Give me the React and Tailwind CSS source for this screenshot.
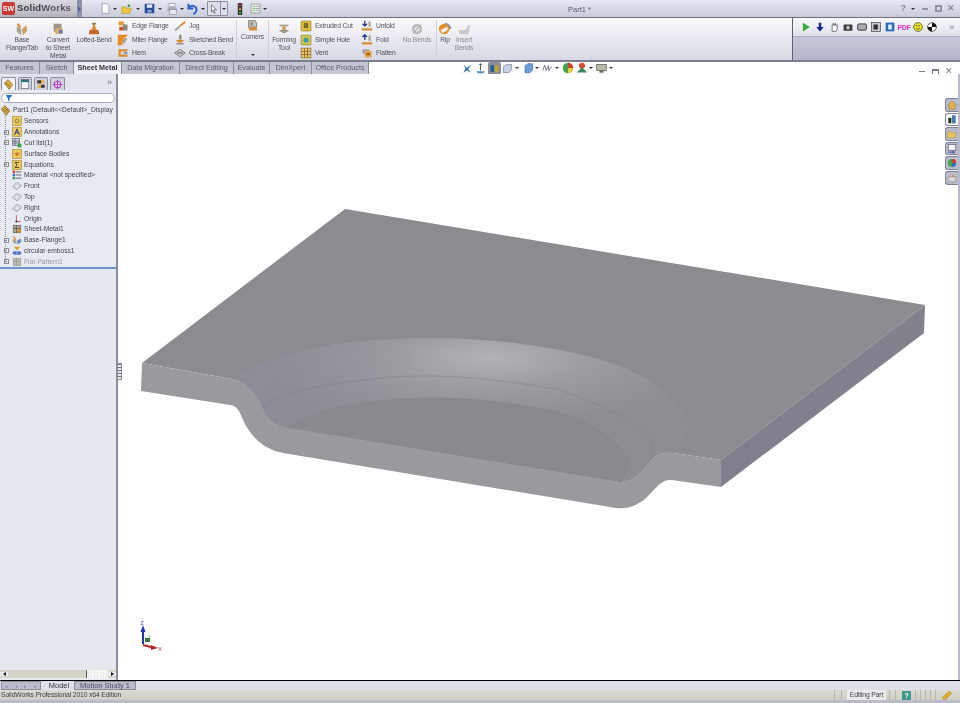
const Ic = ({ s = 12, children, className = "" }) => (
  <svg width={s} height={s} viewBox="0 0 16 16" className={`shrink-0 ${className}`}>
    {children}
  </svg>
);

// ---- ribbon icons ----
const icons = {
  base: <><path d="M2 5l5 3v7l-5-4z" fill="#a8a294" /><path d="M8 8l5-4 1 6-5 5z" fill="#c9a15f" /><path d="M4 1l3 5-2 1-3-4z" fill="#e08a2e" /></>,
  convert: <><rect x="3" y="2" width="9" height="9" fill="#9a958c" /><path d="M5 7l8 0 1 6-9 1z" fill="#d8b071" /><circle cx="11" cy="11" r="2.5" fill="#6f7fa8" /></>,
  loft: <><path d="M8 1l3 8H5z" fill="#e08a2e" /><path d="M3 9h10l1 5H2z" fill="#c2682a" /><rect x="6" y="1" width="4" height="2" fill="#8a6a3c" /></>,
  edge: <><path d="M2 2h7v5H2z" fill="#e59a2a" /><path d="M8 6h6v8H8z" fill="#8d8778" /><path d="M3 9h5v5H3z" fill="#c9571f" /></>,
  miter: <><path d="M1 1h14L8 7 7 15H1z" fill="#ea8a20" /><path d="M7 8l5-3 2 1-5 8z" fill="#a8a294" /></>,
  hem: <><path d="M2 3h12v3H5v4h9v3H2z" fill="#d98a2c" /><path d="M9 7h5v2H9z" fill="#6a7fa0" /></>,
  jog: <><path d="M1 12l7-5 1 2-7 6z" fill="#a6a095" /><path d="M8 6l7-5v3l-6 5z" fill="#d88c35" /></>,
  sketched: <><path d="M7 1h3v6H7z" fill="#8d8778" /><path d="M2 9l6-2 6 2-6 3z" fill="#d88c35" /><path d="M3 12h10v2H3z" fill="#9a948a" /></>,
  cross: <><path d="M1 8l7-5 7 5-7 5z" fill="#c8c8c8" stroke="#6a6a6a" strokeWidth="1" /><path d="M4 8h8" stroke="#444" strokeWidth="1" /></>,
  corners: <><path d="M3 2h8l2 3v5H3z" fill="#c8c6c0" stroke="#77736a" /><path d="M3 10h10l1 4H4z" fill="#d88c35" /><circle cx="7" cy="6" r="2" fill="#8a8a90" /></>,
  forming: <><path d="M3 3h10v2H3z" fill="#a79f90" /><path d="M6 5h4v4H6z" fill="#d8a03c" /><path d="M2 10l6-2 6 2-6 3z" fill="#9c978c" /></>,
  cut: <><rect x="1.500" y="1.500" width="13" height="13" rx="1" fill="#e9c536" stroke="#8a7a20" /><rect x="5" y="4" width="6" height="7" fill="#7c6d2e" /></>,
  hole: <><rect x="1.500" y="1.500" width="13" height="13" rx="1" fill="#d9c94a" stroke="#7f8a2a" /><circle cx="8" cy="8" r="3.5" fill="#3f9aa8" /></>,
  vent: <><rect x="1.500" y="1.500" width="13" height="13" fill="#e9c872" stroke="#8a6a20" /><path d="M2 6h12M2 10h12M6 2v12M10 2v12" stroke="#8a5a20" strokeWidth="1" /></>,
  unfold: <><path d="M5 1v7M2 5l3 3 3-3" stroke="#1b2f86" strokeWidth="1.6" fill="none" /><path d="M10 2h3v7h-3z" fill="#a8a294" /><path d="M1 11h14v3H1z" fill="#d88c35" /></>,
  fold: <><path d="M5 8V1M2 4l3-3 3 3" stroke="#1b2f86" strokeWidth="1.6" fill="none" /><path d="M10 2h3v7h-3z" fill="#a8a294" /><path d="M1 11h14v3H1z" fill="#d88c35" /></>,
  flatten: <><path d="M2 3h9v6H2z" fill="#9aa0b0" /><path d="M5 5h9v9H5z" fill="#e2a24a" /><path d="M7 8h5v3H7z" fill="#a35f22" /></>,
  nobends: <><circle cx="8" cy="8" r="6" fill="#bdbdbd" /><circle cx="8" cy="8" r="3" fill="#e2e2e2" /><path d="M3 13L13 3" stroke="#a0a0a0" /></>,
  rip: <><path d="M8 1a7 7 0 017 7H8z" fill="#7d8cb0" /><circle cx="7" cy="8" r="6" fill="#e58d2a" /><path d="M3 9l8-4v4l-6 4z" fill="#eee" /></>,
  insert: <><path d="M2 9h8l3-6 2 1-2 10H3z" fill="#c9c9c9" /></>,
};

const LargeBtn = ({ icon, lines, w, muted, high, extra }) => (
  <div className={`flex flex-col items-center ${high ? "pt-[1px]" : "pt-[4px]"} ${muted ? "text-[#8b8b92]" : "text-[#50505c]"}`} style={{ width: w }}>
    <Ic s={high ? 13 : 14}>{icons[icon]}</Ic>
    <div className={`${high ? "mt-[1px]" : ""} text-center leading-[8px]`}>
      {lines.map((l) => (
        <div key={l} className="whitespace-nowrap">{l}</div>
      ))}
    </div>
    {extra}
  </div>
);

const SmallCol = ({ rows, w }) => (
  <div className="flex flex-col pt-[1px]" style={{ width: w }}>
    {rows.map(([icon, label, muted]) => (
      <div key={label} className={`flex h-[14px] items-center gap-[3px] whitespace-nowrap ${muted ? "text-[#8b8b92]" : "text-[#50505c]"}`}>
        <Ic s={12}>{icons[icon]}</Ic>
        {label}
      </div>
    ))}
  </div>
);

const Divider = () => <div className="mx-[1px] my-[2px] w-[1px] bg-[#d0d1da]" />;

const Caret = ({ className = "" }) => (
  <span className={`inline-block h-0 w-0 shrink-0 border-x-[2px] border-t-[2px] border-x-transparent border-t-[#333] ${className}`} />
);

const QuickAccess = () => (
  <div className="ml-[18px] flex items-center">
    <Ic s={11}><path d="M3 1h7l3 3v11H3z" fill="#fff" stroke="#7a8aa0" /></Ic>
    <Caret className="ml-[2px]" />
    <Ic s={12} className="ml-[4px]"><path d="M1 5h5l1 2h7l-2 7H1z" fill="#eac64a" stroke="#a78a20" strokeWidth=".6" /><path d="M9 1l4 3-4 2z" fill="#3aa03a" /></Ic>
    <Caret className="ml-[3px]" />
    <Ic s={11} className="ml-[4px]"><rect x="1" y="1" width="14" height="14" rx="1" fill="#2a4a9c" /><rect x="4" y="2" width="8" height="5" fill="#dfe8f5" /><rect x="5" y="10" width="6" height="4" fill="#8ea4cc" /></Ic>
    <Caret className="ml-[3px]" />
    <Ic s={12} className="ml-[4px]"><rect x="4" y="1" width="8" height="4" fill="#f2f2f2" stroke="#777" strokeWidth=".6" /><rect x="2" y="5" width="12" height="6" fill="#a9aeb8" /><rect x="5" y="9" width="9" height="6" fill="#e5e7ef" stroke="#777" strokeWidth=".6" /></Ic>
    <Caret className="ml-[2px]" />
    <Ic s={13} className="ml-[2px]"><path d="M3 2v6h6" fill="none" stroke="#2a5fc4" strokeWidth="2.4" /><path d="M3 8c3-5 9-4 10 1 0 3-2 5-4 6" fill="none" stroke="#2a5fc4" strokeWidth="2.4" /></Ic>
    <Caret className="ml-[2px]" />
    <div className="ml-[2px] flex h-[15px] items-center rounded-[1px] border border-[#8c8fa0] bg-[#dcdfe8]">
      <Ic s={10} className="mx-[1px]"><path d="M4 1l8 8H8l2 5-2 1-2-5-2 3z" fill="#fff" stroke="#445" strokeWidth="1" /></Ic>
      <span className="flex h-full items-center border-l border-[#8c8fa0] px-[1px]"><Caret /></span>
    </div>
    <Ic s={12} className="ml-[6px]"><rect x="5" y="0" width="6" height="16" rx="1" fill="#3b3b3b" /><circle cx="8" cy="3" r="1.5" fill="#e2342c" /><circle cx="8" cy="8" r="1.5" fill="#e8b52c" /><circle cx="8" cy="13" r="1.5" fill="#3aa83a" /></Ic>
    <Ic s={11} className="ml-[4px]"><rect x="1.500" y="1.500" width="13" height="13" fill="#f4f6f0" stroke="#6c8a72" /><path d="M4 5h3M4 8h3M4 11h3" stroke="#3aa03a" strokeWidth="1.2" /><path d="M8 5h5M8 8h5M8 11h5" stroke="#6b7a90" /></Ic>
    <Caret className="ml-[2px]" />
  </div>
);

const TitleBar = () => (
  <div className="flex h-[18px] items-center border-b border-[#6f7180] bg-gradient-to-b from-[#e6e8f2] to-[#c8cbda]">
    <div className="flex h-full w-[77px] items-center bg-gradient-to-b from-[#d9dae0] to-[#b4b5bc]">
      <div className="ml-[2px] flex h-[13px] w-[13px] items-center justify-center rounded-[2px] bg-[#c83a33] text-[7px] font-bold leading-none text-white">SW</div>
      <span className="ml-[2px] text-[9.5px] font-bold tracking-[0.2px] text-[#3a3a42]">Solid<span className="text-[#55555f]">Works</span></span>
    </div>
    <div className="flex h-full w-[5px] items-center justify-center bg-[#8e92a6]">
      <span className="h-0 w-0 border-y-[3px] border-l-[3px] border-y-transparent border-l-[#4d5fa0]" />
    </div>
    <QuickAccess />
    <div className="flex-1" />
    <span className="absolute left-[568px] top-[5px] text-[7.5px] leading-[9px] text-[#55556a]">Part1 *</span>
    <div className="mr-[5px] flex items-center text-[9px] font-bold leading-none text-[#8a8ea0]">
      <span>?</span>
      <Caret className="ml-[5px]" />
      <span className="ml-[7px] h-[2px] w-[6px] bg-[#9094a6]" />
      <span className="ml-[7px] h-[7px] w-[7px] border-2 border-[#9094a6]" />
      <span className="ml-[5px]">✕</span>
    </div>
  </div>
);

const Macro = () => (
  <div className="flex h-[42px] w-[168px] flex-col border-l border-[#5f6170]">
    <div className="flex h-[18px] items-center gap-[4px] bg-gradient-to-b from-[#f8f9fc] to-[#dfe1ec] pl-[8px]">
      <Ic s={10}><path d="M3 1l11 7-11 7z" fill="#37a83c" /></Ic>
      <Ic s={10}><path d="M6 1h4v7h4l-6 7-6-7h4z" fill="#16258c" /></Ic>
      <Ic s={10}><path d="M5 15V5l2-3 1 4 2-4 1 4 2-2v7l-2 4z" fill="#fff" stroke="#333" strokeWidth="1" /></Ic>
      <Ic s={10}><rect x="1" y="4" width="14" height="10" rx="1" fill="#3a3a3a" /><circle cx="8" cy="9" r="3" fill="#bbb" /></Ic>
      <Ic s={10}><rect x="1" y="3" width="14" height="10" rx="2" fill="#aaa" stroke="#333" strokeWidth="1.4" /></Ic>
      <Ic s={10}><rect x="1" y="1" width="14" height="14" fill="#c8c8d0" stroke="#333" /><path d="M4 4h7v8H4z" fill="#333" /></Ic>
      <Ic s={10}><rect x="1" y="1" width="14" height="14" fill="#2a6ab8" /><rect x="5" y="4" width="6" height="8" fill="#d8e8f4" /></Ic>
      <span className="flex w-[10px] justify-center whitespace-nowrap text-[7px] font-bold leading-none tracking-[-0.3px] text-[#ea2ec8]">PDF</span>
      <Ic s={10}><circle cx="8" cy="8" r="7" fill="#e8e01c" stroke="#333" strokeWidth="1" /><path d="M5 10q3 3 6 0" stroke="#333" fill="none" /><circle cx="6" cy="6" r="1" fill="#333" /><circle cx="10" cy="6" r="1" fill="#333" /></Ic>
      <Ic s={10}><circle cx="8" cy="8" r="7" fill="#fff" stroke="#111" /><path d="M8 1a7 7 0 017 7H8zM8 8v7a7 7 0 01-7-7z" fill="#111" /></Ic>
      <span className="ml-auto mr-[6px] text-[9px] leading-none text-[#7c7e90]">»</span>
    </div>
    <div className="flex-1 border-t border-[#a9acc0] bg-gradient-to-b from-[#c5c8da] to-[#b3b6ca]" />
  </div>
);

const Ribbon = () => (
  <div className="flex h-[44px] border-b-2 border-[#7d7e8c] bg-gradient-to-b from-[#fbfbfd] to-[#d6d8e4] text-[6.8px] leading-[8px] tracking-[-0.17px]">
    <div className="w-[2px]" />
    <LargeBtn icon="base" lines={["Base", "Flange/Tab"]} w={40} />
    <LargeBtn icon="convert" lines={["Convert", "to Sheet", "Metal"]} w={32} />
    <LargeBtn icon="loft" lines={["Lofted-Bend"]} w={40} />
    <div className="w-[3px]" />
    <SmallCol w={57} rows={[["edge", "Edge Flange"], ["miter", "Miter Flange"], ["hem", "Hem"]]} />
    <SmallCol w={61} rows={[["jog", "Jog"], ["sketched", "Sketched Bend"], ["cross", "Cross-Break"]]} />
    <Divider />
    <LargeBtn icon="corners" lines={["Corners"]} w={29} high extra={<Caret className="mt-[13px]" />} />
    <Divider />
    <LargeBtn icon="forming" lines={["Forming", "Tool"]} w={28} />
    <div className="w-[2px]" />
    <SmallCol w={61} rows={[["cut", "Extruded Cut"], ["hole", "Simple Hole"], ["vent", "Vent"]]} />
    <SmallCol w={38} rows={[["unfold", "Unfold"], ["fold", "Fold"], ["flatten", "Flatten"]]} />
    <LargeBtn icon="nobends" lines={["No Bends"]} w={36} muted />
    <Divider />
    <LargeBtn icon="rip" lines={["Rip"]} w={14} />
    <LargeBtn icon="insert" lines={["Insert", "Bends"]} w={24} muted />
    <div className="flex-1" />
    <Macro />
  </div>
);

const cmTabs = [
  ["Features", 40],
  ["Sketch", 34],
  ["Sheet Metal", 48, true],
  ["Data Migration", 58],
  ["Direct Editing", 54],
  ["Evaluate", 36],
  ["DimXpert", 42],
  ["Office Products", 57],
];

const Hud = () => (
  <div className="ml-[93px] flex items-center">
    <Ic s={11}><path d="M2 2l5 5 7-5-5 7 4 5-6-3-5 3 3-6z" fill="#3b78a8" /></Ic>
    <Ic s={11} className="ml-[2px]"><path d="M8 1v10M6 3l2-2 2 2" stroke="#222" fill="none" /><path d="M2 12h12l-2 3H4z" fill="#4a8ac8" /></Ic>
    <div className="ml-[2px] flex h-[13px] w-[13px] items-center justify-center rounded-[2px] bg-[#8c8d96]">
      <Ic s={9}><rect x="1" y="2" width="6" height="12" fill="#1f5d96" /><rect x="9" y="2" width="6" height="12" fill="#c9a52c" /></Ic>
    </div>
    <Ic s={11} className="ml-[1px]"><path d="M2 5l5-3h7v8l-4 4H2z" fill="#c4d2e4" stroke="#6f7e98" /></Ic>
    <Caret className="ml-[2px]" />
    <Ic s={11} className="ml-[4px]"><path d="M3 4l4-3h7v9l-4 4H3z" fill="#6e9ed8" stroke="#4a6ea4" /></Ic>
    <Caret className="ml-[1px]" />
    <Ic s={11} className="ml-[3px]"><path d="M1 11l3-8 2 8 3-7 1 7 4-6" fill="none" stroke="#667" strokeWidth="1.2" /></Ic>
    <Caret className="ml-[2px]" />
    <Ic s={12} className="ml-[3px]"><circle cx="8" cy="8" r="7" fill="#3fa64a" /><path d="M8 8V1a7 7 0 017 7z" fill="#d93a30" /><path d="M8 8h7a7 7 0 01-7 7z" fill="#e8c83a" /></Ic>
    <Ic s={12} className="ml-[2px]"><circle cx="8" cy="5" r="4" fill="#d94a30" /><path d="M1 14l7-7 7 7z" fill="#3f8a5a" /></Ic>
    <Caret className="ml-[1px]" />
    <Ic s={11} className="ml-[3px]"><rect x="1" y="2" width="14" height="9" fill="#b8b7a8" stroke="#555" /><rect x="5" y="11" width="6" height="3" fill="#666" /></Ic>
    <Caret className="ml-[2px]" />
  </div>
);

const TabsRow = () => (
  <div className="relative flex h-[12px] items-center bg-white text-[7.2px]">
    {cmTabs.map(([label, w, active]) => (
      <div
        key={label}
        style={{ width: w }}
        className={`flex h-[12px] items-center justify-center whitespace-nowrap border-r border-[#8b8c98] ${
          active ? "bg-[#eff0f5] font-bold text-[#33333d]" : "bg-[#c3c5d0] text-[#5a5a66]"
        }`}
      >
        {label}
      </div>
    ))}
    <Hud />
    <div className="absolute right-[7px] top-[5px] flex items-center text-[9px] leading-none text-[#777a88]">
      <span className="h-[1px] w-[6px] bg-[#777a88]" />
      <span className="ml-[7px] h-[6px] w-[7px] border border-t-2 border-[#777a88]" />
      <span className="ml-[6px]">✕</span>
    </div>
  </div>
);

const plane = <><path d="M1 9l7-7 7 5-7 7z" fill="none" stroke="#777" /><path d="M4 9l4-4 4 3-4 4z" fill="none" stroke="#aaa" strokeWidth=".7" /></>;

// ---- feature tree ----
const tree = [
  { label: "Sensors", icon: <><rect x="1" y="1" width="14" height="14" fill="#eac95a" stroke="#a88418" /><circle cx="8" cy="8" r="3" fill="none" stroke="#555" /></> },
  { label: "Annotations", plus: true, icon: <><rect x="1" y="1" width="14" height="14" fill="#eac95a" stroke="#a88418" /><path d="M4 13L8 3l4 10M6 9h4" fill="none" stroke="#1f3a8a" strokeWidth="1.6" /></> },
  { label: "Cut list(1)", plus: true, icon: <><rect x="1" y="1" width="11" height="11" fill="#c8cfe0" stroke="#556" /><path d="M1 5h11M1 8h11M5 1v11" stroke="#556" /><circle cx="12" cy="12" r="3.5" fill="#3aa04a" /></> },
  { label: "Surface Bodies", icon: <><rect x="1" y="1" width="14" height="14" fill="#eac95a" stroke="#a88418" /><path d="M4 7l4 5 4-5-4-2z" fill="#d8752a" /></> },
  { label: "Equations", plus: true, icon: <><rect x="1" y="1" width="14" height="14" fill="#eac95a" stroke="#a88418" /><path d="M11 4H5l3 4-3 4h6" fill="none" stroke="#222" strokeWidth="1.2" /></> },
  { label: "Material <not specified>", icon: <><path d="M6 3h9M6 8h9M6 13h9" stroke="#555" strokeWidth="1.4" /><rect x="1" y="1" width="4" height="4" fill="#d83a30" /><rect x="1" y="6" width="4" height="4" fill="#3a6ac8" /><rect x="1" y="11" width="4" height="4" fill="#3aa04a" /></> },
  { label: "Front", icon: plane },
  { label: "Top", icon: plane },
  { label: "Right", icon: plane },
  { label: "Origin", icon: <><path d="M7 2v10h7" fill="none" stroke="#c03030" strokeWidth="1.2" /><circle cx="7" cy="12" r="1.6" fill="#333" /></> },
  { label: "Sheet-Metal1", icon: <><rect x="2" y="2" width="12" height="12" fill="#b4a88a" stroke="#555" /><path d="M2 7h12M7 2v12" stroke="#444" /><path d="M9 9h5v5H9z" fill="#d88c35" /></> },
  { label: "Base-Flange1", plus: true, icon: <><path d="M1 6l6 3v6l-6-4z" fill="#a8a294" /><path d="M8 9l6-4 1 6-6 4z" fill="#7089c0" /><path d="M3 1l4 6-2 1-3-4z" fill="#e08a2e" /></> },
  { label: "circular emboss1", plus: true, icon: <><path d="M3 1h10L8 7z" fill="#e0a02a" /><ellipse cx="8" cy="11" rx="7" ry="3" fill="#4a78c0" /><path d="M8 7v6" stroke="#fff" /></> },
  { label: "Flat-Pattern1", plus: true, muted: true, icon: <><rect x="2" y="2" width="12" height="12" fill="#bdbbb4" stroke="#999" /><path d="M2 7h12M7 2v12" stroke="#8f8f8f" /></> },
];

const Sidebar = () => (
  <div className="flex w-[118px] shrink-0 flex-col border-r-2 border-[#8b8d9c] bg-[#e8eaf1] text-[6.7px]">
    <div className="flex h-[16px] items-end gap-[2px] bg-[#e2e4ee] pl-[1px]">
      <div className="flex h-[13px] w-[15px] items-center justify-center rounded-t-[2px] border border-b-0 border-[#8b8d9c] bg-[#f2f3f8]">
        <Ic s={11}><path d="M2 6l5-5 7 7-5 7z" fill="#e3b23c" stroke="#6a5010" /><path d="M5 6l5 5" stroke="#333" /></Ic>
      </div>
      <div className="flex h-[13px] w-[14px] items-center justify-center rounded-t-[2px] border border-b-0 border-[#8b8d9c] bg-[#cfd2de]">
        <Ic s={10}><rect x="2" y="1" width="12" height="14" fill="#f7f7f7" stroke="#556" /><rect x="2" y="1" width="12" height="4" fill="#2e6f7a" /></Ic>
      </div>
      <div className="flex h-[13px] w-[14px] items-center justify-center rounded-t-[2px] border border-b-0 border-[#8b8d9c] bg-[#cfd2de]">
        <Ic s={10}><path d="M2 2h6v5H2zM8 9h6v5H8z" fill="#3a3a3a" /><path d="M8 2h5v5H8zM3 9h5v5H3z" fill="#e3b23c" /></Ic>
      </div>
      <div className="flex h-[13px] w-[15px] items-center justify-center rounded-t-[2px] border border-b-0 border-[#8b8d9c] bg-[#cfd2de]">
        <Ic s={11}><circle cx="8" cy="8" r="5" fill="none" stroke="#b02ec0" strokeWidth="1.4" /><path d="M8 1v14M1 8h14" stroke="#b02ec0" strokeWidth="1.2" /></Ic>
      </div>
      <span className="ml-auto mr-[4px] self-center text-[9px] leading-none text-[#6c6e80]">»</span>
    </div>
    <div className="mx-[1px] mt-[3px] flex h-[10px] items-center rounded-[5px] border border-[#a9abbc] bg-white pl-[3px]">
      <Ic s={8}><path d="M1 2h14L9 9v6l-3-2V9z" fill="#2a78c8" /></Ic>
    </div>
    <div className="mt-[2px] flex h-[11px] items-center gap-[2px] overflow-hidden whitespace-nowrap text-[#3f3f4a]">
      <Ic s={11}><path d="M2 6l5-5 7 7-5 7z" fill="#e3b23c" stroke="#5a4510" /><path d="M5 6l5 5M7 4l5 5" stroke="#333" /></Ic>
      <span>Part1 (Default&lt;&lt;Default&gt;_Display</span>
    </div>
    <div className="relative">
      <div className="absolute bottom-[6px] left-[5px] top-0 border-l border-dotted border-[#8a8a92]" />
      {tree.map((row) => (
        <div
          key={row.label}
          className={`relative flex h-[10.8px] items-center whitespace-nowrap ${row.muted ? "text-[#9a9aa2]" : "text-[#3f3f4a]"}`}
        >
          <span className="flex w-[12px] justify-center">
            {row.plus && (
              <span className="flex h-[5px] w-[5px] items-center justify-center border border-[#8a8a92] bg-white text-[5px] leading-none text-[#333]">+</span>
            )}
          </span>
          <Ic s={10}>{row.icon}</Ic>
          <span className="ml-[2px]">{row.label}</span>
        </div>
      ))}
    </div>
    <div className="h-[2px] shrink-0 bg-[#6f95c6]" />
    <div className="flex-1 bg-[#e6e8ef]" />
    <div className="flex h-[8px] items-center bg-[#d6d4c6] text-[#222]">
      <span className="flex w-[8px] justify-center bg-[#e8eaf1]"><span className="h-0 w-0 border-y-[2px] border-r-[3px] border-y-transparent border-r-[#111]" /></span>
      <div className="h-full flex-1 border-r border-[#555]" />
      <div className="h-full w-[21px] bg-[repeating-conic-gradient(#e8e8e8_0%_25%,#ffffff_0%_50%)] bg-[length:3px_3px]" />
      <span className="flex w-[8px] justify-center bg-[#e8eaf1]"><span className="h-0 w-0 border-y-[2px] border-l-[3px] border-y-transparent border-l-[#111]" /></span>
    </div>
    <div className="h-[2px] shrink-0" />
  </div>
);

const TaskPane = () => (
  <div className="absolute right-0 top-[24px] flex w-[13px] flex-col gap-[1px]">
    {[
      <><path d="M8 1l7 7h-2v7H3V8H1z" fill="#e0b050" stroke="#8a6a20" strokeWidth=".6" /></>,
      <><rect x="2" y="6" width="5" height="9" fill="#1f3a20" /><rect x="8" y="2" width="6" height="13" fill="#4a78b0" /></>,
      <><path d="M1 4h5l2 2h7l-2 8H1z" fill="#eac65a" stroke="#9a7a20" strokeWidth=".6" /></>,
      <><rect x="2" y="1" width="12" height="9" fill="#f4f4f4" stroke="#556" /><path d="M2 13h10M9 11l3 2-3 2" stroke="#1f3aa0" fill="none" strokeWidth="1.2" /></>,
      <><circle cx="8" cy="8" r="6.5" fill="#3fa64a" /><path d="M8 8V1.500A6.500 6.500 0 0114.5 8z" fill="#d93a30" /><path d="M8 8h6.500A6.500 6.500 0 018 14.5z" fill="#3a6ac8" /></>,
      <><path d="M2 6h12v8H2z" fill="#d8d8d8" stroke="#888" /><path d="M9 2l4 4H8z" fill="#d88c35" /></>,
    ].map((icon, i) => (
      <div
        key={i}
        className={`flex h-[13.6px] items-center justify-center rounded-l-[3px] border border-r-0 border-[#7f8194] ${i === 1 ? "bg-white" : "bg-[#b8bbcb]"}`}
      >
        <Ic s={10}>{icon}</Ic>
      </div>
    ))}
  </div>
);

const Model = () => (
  <svg className="block h-full w-full" viewBox="118 74 840 606">
    <defs>
      <radialGradient id="band" gradientUnits="userSpaceOnUse" cx="490" cy="358" r="230" gradientTransform="translate(0 258) scale(1 .28)">
        <stop offset="0" stopColor="#b2b1b6" />
        <stop offset="0.45" stopColor="#9c9ba1" />
        <stop offset="1" stopColor="#8e8d94" />
      </radialGradient>
      <linearGradient id="leftBand" gradientUnits="userSpaceOnUse" x1="240" y1="0" x2="420" y2="0">
        <stop offset="0" stopColor="#8c8c9a" stopOpacity=".55" />
        <stop offset="1" stopColor="#8c8c9a" stopOpacity="0" />
      </linearGradient>
      <linearGradient id="side" gradientUnits="userSpaceOnUse" x1="721" y1="470" x2="925" y2="320">
        <stop offset="0" stopColor="#807f8e" />
        <stop offset="1" stopColor="#82818c" />
      </linearGradient>
    </defs>
    {/* flat top of the plate */}
    <path d="M142 363L345 209L925 305L721 460L680 454C665 451 657 453 650 462C642 472 632 483 620 482L283 427C272 424 266 418 262 408C256 393 245 381 232 379Z" fill="#8c8b90" />
    {/* emboss */}
    <path d="M232 379C250 365 290 350 330 345C365 340 400 338 430 338C510 338 590 352 630 370C655 381 680 402 689 420C692 432 684 445 673 453C665 451 657 453 650 462C642 472 632 483 620 482L283 427C272 424 266 418 262 408C256 393 245 381 232 379Z" fill="url(#band)" />
    <path d="M232 379C250 365 290 350 330 345C365 340 400 338 430 338V420L283 427C272 424 266 418 262 408C256 393 245 381 232 379Z" fill="url(#leftBand)" />
    <path d="M232 379C250 365 290 350 330 345M630 370C655 381 680 402 689 420C692 432 684 445 673 453" fill="none" stroke="#81808a" strokeWidth=".4" />
    <path d="M263 408C272 400 280 396 290 393C310 388 345 381 380 378C400 376 415 376 430 376C490 377 530 385 560 390C575 395 590 401 603 407C615 413 628 420 637 427C646 433 652 438 652 442C653 447 652 451 650 455" fill="none" stroke="#7f7e84" strokeWidth=".5" />
    {/* pocket floor */}
    <path d="M287 428C293 423 300 420 307 417C325 410 345 406 363 403C385 400 410 398 430 398C480 398 525 404 560 413C577 418 592 425 603 433C613 441 622 449 627 457C630 464 628 472 620 482Z" fill="#8a898e" stroke="#807f85" strokeWidth=".4" />
    {/* front wall */}
    <path d="M142 363L232 379C245 381 256 393 262 408C266 418 272 424 283 427L620 482C632 483 642 472 650 462C657 453 665 451 680 454L721 460L721 487L672 480C662 479 657 487 650 494C640 505 628 511 610 507L283 453C262 449 250 435 243 420C239 410 237 406 230 405L141 391Z" fill="#9a999e" />
    <path d="M721 460L925 305L924 333L721 487Z" fill="url(#side)" />
    {/* triad */}
    <path d="M143 644V628" stroke="#2233b0" strokeWidth="2" />
    <path d="M140.500 632L143 625L145.500 632Z" fill="#2233b0" />
    <path d="M143 645L155 648" stroke="#b02a2a" strokeWidth="2" />
    <path d="M151 645L158 648L151 650Z" fill="#b02a2a" />
    <rect x="145" y="638" width="5" height="4" fill="#2f7a35" />
    <text x="140.500" y="625" fontSize="5" fontFamily="Liberation Sans" fill="#2233b0">Z</text>
    <text x="148" y="638" fontSize="4" fontFamily="Liberation Sans" fill="#2f7a35">Y</text>
    <text x="158" y="651" fontSize="6" fontFamily="Liberation Sans" fill="#c04040">X</text>
  </svg>
);

const Canvas = () => (
  <div className="relative min-w-0 flex-1 border-r-2 border-[#b8bbcc] bg-white">
    <Model />
    <TaskPane />
    {/* splitter grip */}
    <div className="absolute left-0 top-[289px] h-[17px] w-[4px] rounded-r-[1px] border border-l-0 border-[#8b8d9c] bg-[repeating-linear-gradient(#6f7180_0_1px,#e8eaf1_1px_3px)]" />
  </div>
);

const BottomTabs = () => (
  <div className="flex h-[10px] items-stretch border-t border-black bg-[#dde0e8] text-[7.5px] leading-[8px]">
    <div className="ml-[1px] flex w-[40px] items-center justify-around border border-[#8b8c98] bg-[#b9bcc9] text-[5px] text-[#8a8c9a]">
      <span>◂</span><span>◂</span><span>▸</span><span>▸</span>
    </div>
    <div className="ml-[3px] flex w-[30px] items-center justify-center text-[#33333d]">Model</div>
    <div className="flex w-[62px] items-center justify-center border border-[#8b8c98] bg-[#b9bcc9] text-[#4f4f5c]">Motion Study 1</div>
  </div>
);

const StatusBar = () => (
  <div className="flex h-[10px] items-center bg-gradient-to-b from-[#dcdbd2] to-[#d0cfc6] text-[6.8px] tracking-[-0.15px] text-[#3f3f4a]">
    <span className="ml-[1px]">SolidWorks Professional 2010 x64 Edition</span>
    <div className="flex-1" />
    <div className="flex h-full items-center">
      <span className="mr-[5px] h-full w-[8px] border-x border-[#b8b7ae]" />
      <span className="flex h-full w-[39px] items-center justify-center bg-[#eaeaea]">Editing Part</span>
      <span className="ml-[3px] h-full w-[7px] border-x border-[#b8b7ae]" />
      <span className="ml-[6px] flex h-[9px] w-[9px] items-center justify-center bg-[#3f9a8a] text-[7px] font-bold leading-none text-white">?</span>
      <span className="ml-[4px] h-full w-[25px] bg-[repeating-linear-gradient(90deg,#b8b7ae_0_1px,transparent_1px_5px)]" />
      <Ic s={10} className="ml-[2px] mr-[8px]"><path d="M1 12L11 2l4 3L6 15H2z" fill="#e3b02c" stroke="#8a6a10" strokeWidth=".7" /></Ic>
    </div>
  </div>
);

export default function App() {
  return (
    <div className="relative flex h-[703px] w-[960px] flex-col overflow-hidden bg-white font-['Liberation_Sans',sans-serif] blur-[0.3px]">
      <TitleBar />
      <Ribbon />
      <TabsRow />
      <div className="flex min-h-0 flex-1">
        <Sidebar />
        <Canvas />
      </div>
      <BottomTabs />
      <StatusBar />
      <div className="h-[3px] bg-[#b9bbc8]" />
    </div>
  );
}
